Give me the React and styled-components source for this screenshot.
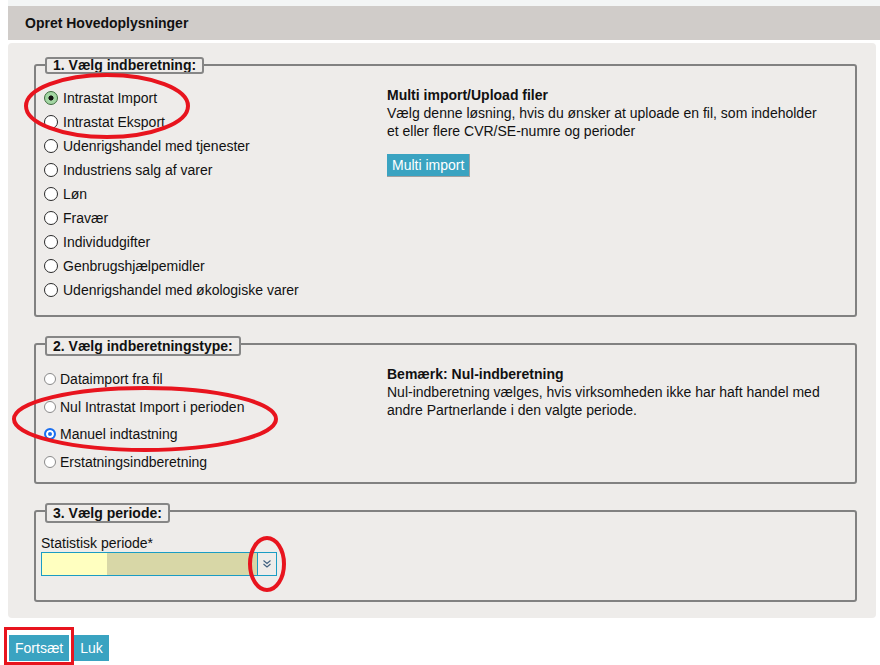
import React from "react";
import styled, { createGlobalStyle } from "styled-components";

const GlobalStyle = createGlobalStyle`
  body {
    margin: 0;
    background: #fff;
    font-family: "Liberation Sans", Arial, sans-serif;
    font-size: 14px;
    color: #111;
  }
`;

const Page = styled.div`
  position: relative;
  width: 880px;
  height: 665px;
  overflow: hidden;
`;

const TopStrip = styled.div`
  height: 6px;
  margin-left: 8px;
  background: #f3f5f5;
`;

const Header = styled.div`
  height: 34px;
  margin-left: 8px;
  padding-left: 17px;
  display: flex;
  align-items: center;
  background: #d0ccc9;
  font-weight: bold;
  font-size: 14px;
`;

const Panel = styled.div`
  margin: 3px 4px 0 8px;
  padding: 21px 19px 16px 26px;
  background: #eeecea;
  border-radius: 4px;
  display: flex;
  flex-direction: column;
  gap: 26px;
`;

const Box = styled.div`
  border: 2px solid #818181;
  border-radius: 3px;
  padding: 0 5px ${(p) => p.$bottom}px 5px;
`;

const Legend = styled.div`
  display: block;
  width: fit-content;
  margin: -9px 0 0 4px;
  padding: 0 6px;
  border: 2px solid #868686;
  border-radius: 3px;
  background: #eeecea;
  font-weight: bold;
  line-height: ${(p) => (p.$short ? 13 : 16)}px;
  overflow: hidden;
`;

const Columns = styled.div`
  display: grid;
  grid-template-columns: 346px 1fr;
  margin-top: ${(p) => p.$top}px;
`;

const RadioList = styled.div`
  display: flex;
  flex-direction: column;
  margin-left: 3px;
`;

const RadioRow = styled.label`
  display: flex;
  align-items: center;
  height: ${(p) => p.$h}px;
  gap: ${(p) => (p.$small ? 4 : 5)}px;
`;

const RoundMark = styled.span`
  box-sizing: border-box;
  width: 14px;
  height: 14px;
  border-radius: 50%;
  border: 1px solid ${(p) => (p.$on ? "#3d6b3d" : "#2b2b2b")};
  background: ${(p) =>
    p.$on ? "radial-gradient(circle, #111 0 2.3px, #a3d6a3 2.8px)" : "#fff"};
`;

const SmallMark = styled.span`
  box-sizing: border-box;
  width: 12px;
  height: 12px;
  border-radius: 50%;
  border: ${(p) => (p.$on ? "2px solid #1a6ff0" : "1px solid #8a8a8a")};
  background: ${(p) => (p.$on ? "#1a6ff0" : "#fff")};
  box-shadow: ${(p) => (p.$on ? "inset 0 0 0 2px #fff" : "none")};
`;

const Info = styled.div`
  line-height: 18px;
`;

const InfoTitle = styled.div`
  font-weight: bold;
`;

const Btn = styled.button`
  font-family: "Liberation Sans", Arial, sans-serif;
  font-size: 14px;
  color: #fff;
  background: #3aa3c1;
  border: none;
  border-radius: 0;
  padding: 0 ${(p) => p.$pad}px;
  height: ${(p) => p.$h}px;
  cursor: pointer;
`;

const MultiBtn = styled(Btn)`
  margin-top: 14px;
  border-right: 1px solid #a0a0a0;
  border-bottom: 1px solid #a0a0a0;
`;

const FieldLabel = styled.div`
  margin-top: 11px;
  line-height: 18px;
`;

const Select = styled.div`
  width: 236px;
  height: 24px;
  box-sizing: border-box;
  border: 1px solid #1a9cc4;
  display: grid;
  grid-template-columns: 65px 150px 1px 1fr;
`;

const Fill = styled.span`
  background: ${(p) => p.$c};
`;

const Arrow = styled.span`
  display: flex;
  align-items: center;
  justify-content: center;
  background: #eeecea;
`;

const Buttons = styled.div`
  display: flex;
  gap: 5px;
  margin: 17px 0 0 9px;
`;

const Overlay = styled.svg`
  position: absolute;
  left: 0;
  top: 0;
  pointer-events: none;
`;

const reports = [
  "Intrastat Import",
  "Intrastat Eksport",
  "Udenrigshandel med tjenester",
  "Industriens salg af varer",
  "Løn",
  "Fravær",
  "Individudgifter",
  "Genbrugshjælpemidler",
  "Udenrigshandel med økologiske varer",
];

const types = [
  "Dataimport fra fil",
  "Nul Intrastat Import i perioden",
  "Manuel indtastning",
  "Erstatningsindberetning",
];

export default function App() {
  return (
    <Page>
      <GlobalStyle />
      <TopStrip />
      <Header>Opret Hovedoplysninger</Header>
      <Panel>
        <Box $bottom={13}>
          <Legend $short>1. Vælg indberetning:</Legend>
          <Columns $top={12}>
            <RadioList>
              {reports.map((r, i) => (
                <RadioRow key={r} $h={24}>
                  <RoundMark $on={i === 0} />
                  {r}
                </RadioRow>
              ))}
            </RadioList>
            <div>
              <Info>
                <InfoTitle>Multi import/Upload filer</InfoTitle>
                Vælg denne løsning, hvis du ønsker at uploade en fil, som indeholder
                <br />
                et eller flere CVR/SE-numre og perioder
              </Info>
              <MultiBtn $pad={5} $h={23}>Multi import</MultiBtn>
            </div>
          </Columns>
        </Box>

        <Box $bottom={6}>
          <Legend>2. Vælg indberetningstype:</Legend>
          <Columns $top={9}>
            <RadioList>
              {types.map((t, i) => (
                <RadioRow key={t} $h={27.7} $small>
                  <SmallMark $on={i === 2} />
                  {t}
                </RadioRow>
              ))}
            </RadioList>
            <Info>
              <InfoTitle>Bemærk: Nul-indberetning</InfoTitle>
              Nul-indberetning vælges, hvis virksomheden ikke har haft handel med
              <br />
              andre Partnerlande i den valgte periode.
            </Info>
          </Columns>
        </Box>

        <Box $bottom={24}>
          <Legend>3. Vælg periode:</Legend>
          <FieldLabel>Statistisk periode*</FieldLabel>
          <Select>
            <Fill $c="#ffffc0" />
            <Fill $c="#d8d7a7" />
            <Fill $c="#1a9cc4" />
            <Arrow>
              <svg width="10" height="10" viewBox="0 0 10 10">
                <path
                  d="M1.5 1.5 L5 4.5 L8.5 1.5 M1.5 5 L5 8 L8.5 5"
                  fill="none"
                  stroke="#3f5f7f"
                  strokeWidth="1.1"
                />
              </svg>
            </Arrow>
          </Select>
        </Box>
      </Panel>

      <Buttons>
        <Btn $pad={6} $h={26}>Fortsæt</Btn>
        <Btn $pad={6} $h={26}>Luk</Btn>
      </Buttons>

      <Overlay width="880" height="665" viewBox="0 0 880 665">
        <g fill="none" stroke="#e8141e" strokeWidth="4">
          <ellipse cx="107" cy="106" rx="81" ry="31" />
          <ellipse cx="145" cy="419" rx="131" ry="31" />
          <ellipse cx="267" cy="564" rx="17" ry="26" />
        </g>
        <rect x="5.5" y="628.5" width="67" height="35" fill="none" stroke="#e8141e" strokeWidth="3" />
      </Overlay>
    </Page>
  );
}
